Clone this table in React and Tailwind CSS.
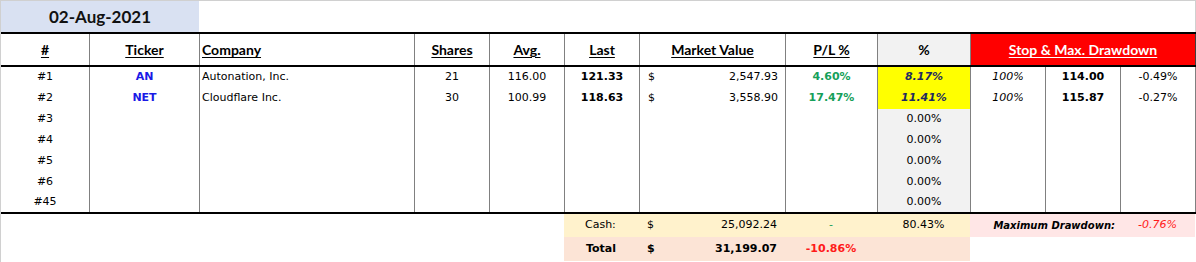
import React from 'react';

const W = [
  'w-[89px]', 'w-[110px]', 'w-[215px]', 'w-[75px]', 'w-[75px]', 'w-[75px]',
  'w-[146px]', 'w-[92px]', 'w-[93px]', 'w-[75px]', 'w-[75px]', 'w-[75px]',
];

const rows = [
  { n: '#1', t: 'AN', c: 'Autonation, Inc.', s: '21', a: '116.00', l: '121.33', mv: '2,547.93', pl: '4.60%', pct: '8.17%', stop: '100%', sp: '114.00', dd: '-0.49%' },
  { n: '#2', t: 'NET', c: 'Cloudflare Inc.', s: '30', a: '100.99', l: '118.63', mv: '3,558.90', pl: '17.47%', pct: '11.41%', stop: '100%', sp: '115.87', dd: '-0.27%' },
  { n: '#3', pct: '0.00%' },
  { n: '#4', pct: '0.00%' },
  { n: '#5', pct: '0.00%' },
  { n: '#6', pct: '0.00%' },
  { n: '#45', pct: '0.00%', last: true },
];

const cell = 'shrink-0 h-full flex items-center border-r border-[#808080]';
const hdr = "font-['Lato',sans-serif] font-bold text-[14px] text-black underline decoration-1 underline-offset-[2px]";

function Row({ r }) {
  const hasData = !!r.t;
  return (
    <div className={`flex ${r.last ? 'h-[19px]' : 'h-[21px]'}`}>
      <div className={`${W[0]} ${cell} justify-center`}>{r.n}</div>
      <div className={`${W[1]} ${cell} justify-center font-bold text-[#1a1ae6]`}>{r.t}</div>
      <div className={`${W[2]} ${cell} pl-[2px]`}>{r.c}</div>
      <div className={`${W[3]} ${cell} justify-center`}>{r.s}</div>
      <div className={`${W[4]} ${cell} justify-center`}>{r.a}</div>
      <div className={`${W[5]} ${cell} justify-center font-bold`}>{r.l}</div>
      <div className={`${W[6]} ${cell} justify-between pl-[8px] pr-[7px]`}>
        {hasData && <span>$</span>}
        {hasData && <span>{r.mv}</span>}
      </div>
      <div className={`${W[7]} ${cell} justify-center font-bold text-[#16a05a]`}>{r.pl}</div>
      <div
        className={`${W[8]} ${cell} justify-center ${
          hasData ? 'bg-[#ffff00] font-bold italic text-[#1f2a60]' : 'bg-[#f2f2f2]'
        }`}
      >
        {r.pct}
      </div>
      <div className={`${W[9]} ${cell} justify-center italic`}>{r.stop}</div>
      <div className={`${W[10]} ${cell} justify-center font-bold`}>{r.sp}</div>
      <div className={`${W[11]} ${cell} justify-center`}>{r.dd}</div>
    </div>
  );
}

export default function App() {
  return (
    <div className="w-[1196px] h-[262px] bg-white border-l border-t border-[#d0d0d0] font-['DejaVu_Sans',sans-serif] text-[11px] text-black overflow-hidden">
      {/* date */}
      <div className="flex h-[31px]">
        <div className="w-[198px] bg-[#d9e1f2] flex items-center justify-center font-['Lato',sans-serif] font-bold text-[17px] text-[#111]">
          02-Aug-2021
        </div>
        <div className="flex-1 border-r border-[#d0d0d0]" />
      </div>
      <div className="h-[2px] w-[1195px] bg-black" />

      {/* header */}
      <div className="flex h-[31px]">
        <div className={`${W[0]} ${cell} justify-center`}><span className={hdr}>#</span></div>
        <div className={`${W[1]} ${cell} justify-center`}><span className={`${hdr} text-[#1a1ae6]`}>Ticker</span></div>
        <div className={`${W[2]} ${cell} pl-[2px]`}><span className={hdr}>Company</span></div>
        <div className={`${W[3]} ${cell} justify-center`}><span className={hdr}>Shares</span></div>
        <div className={`${W[4]} ${cell} justify-center`}><span className={hdr}>Avg.</span></div>
        <div className={`${W[5]} ${cell} justify-center`}><span className={hdr}>Last</span></div>
        <div className={`${W[6]} ${cell} justify-center`}><span className={hdr}>Market Value</span></div>
        <div className={`${W[7]} ${cell} justify-center`}><span className={hdr}>P/L %</span></div>
        <div className={`${W[8]} ${cell} justify-center bg-[#f2f2f2]`}>
          <span className="font-['Lato',sans-serif] font-bold text-[14px]">%</span>
        </div>
        <div className="w-[225px] shrink-0 h-full flex items-center justify-center bg-[#ff0000] border-r border-[#404040]">
          <span className={`${hdr} text-white`}>Stop &amp; Max. Drawdown</span>
        </div>
      </div>
      <div className="h-[2px] w-[1195px] bg-black" />

      {/* positions */}
      {rows.map((r) => (
        <Row key={r.n} r={r} />
      ))}
      <div className="h-[2px] w-[1195px] bg-black" />

      {/* cash */}
      <div className="flex h-[23px]">
        <div className="w-[563px] shrink-0" />
        <div className="flex w-[406px] shrink-0 bg-[#fff2cc] items-center">
          <div className="w-[75px] pl-[21px]">Cash:</div>
          <div className="w-[146px] flex justify-between pl-[8px] pr-[8px]">
            <span>$</span>
            <span>25,092.24</span>
          </div>
          <div className="w-[92px] text-center text-[#16a05a]">-</div>
          <div className="w-[93px] text-center">80.43%</div>
        </div>
        <div className="flex w-[225px] shrink-0 bg-[#ffe6e6] items-center">
          <div className="w-[150px] text-right pr-[5px] font-bold italic text-[10px]">Maximum Drawdown:</div>
          <div className="w-[75px] text-center italic text-[#ff1a1a]">-0.76%</div>
        </div>
      </div>

      {/* total */}
      <div className="flex h-[24px]">
        <div className="w-[563px] shrink-0" />
        <div className="flex w-[406px] shrink-0 bg-[#fce4d6] items-center font-bold">
          <div className="w-[75px] pl-[22px]">Total</div>
          <div className="w-[146px] flex justify-between pl-[8px] pr-[8px]">
            <span>$</span>
            <span>31,199.07</span>
          </div>
          <div className="w-[92px] text-center text-[#ff1a1a]">-10.86%</div>
          <div className="w-[93px]" />
        </div>
      </div>
    </div>
  );
}
